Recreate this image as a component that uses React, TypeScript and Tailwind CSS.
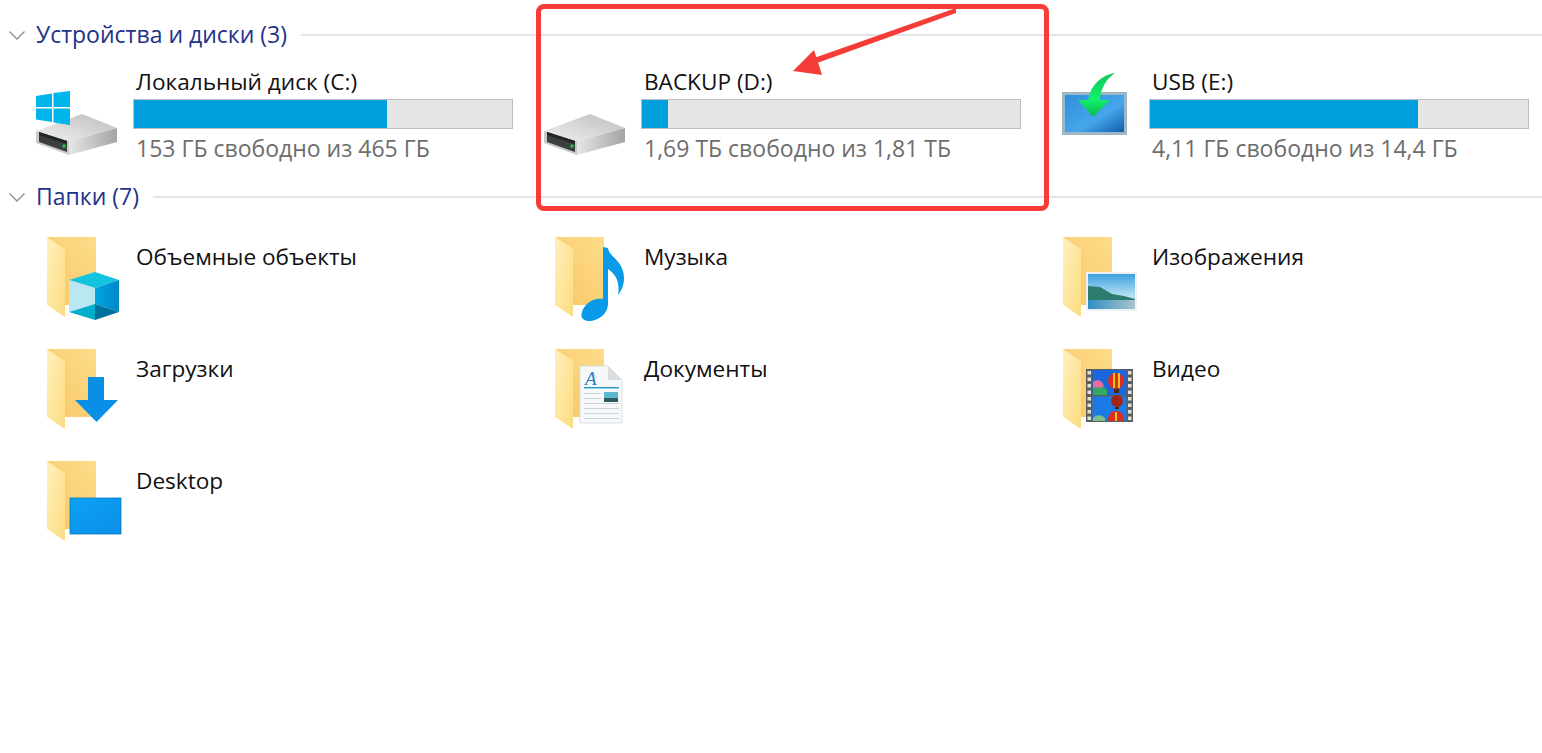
import React from "react";

const drives = [
  { name: "Локальный диск (C:)", free: "153 ГБ свободно из 465 ГБ", used: 253, icon: "system" },
  { name: "BACKUP (D:)", free: "1,69 ТБ свободно из 1,81 ТБ", used: 26, icon: "drive" },
  { name: "USB (E:)", free: "4,11 ГБ свободно из 14,4 ГБ", used: 268, icon: "usb" },
];

const folders = [
  { name: "Объемные объекты", icon: "cube" },
  { name: "Музыка", icon: "music" },
  { name: "Изображения", icon: "image" },
  { name: "Загрузки", icon: "download" },
  { name: "Документы", icon: "doc" },
  { name: "Видео", icon: "video" },
  { name: "Desktop", icon: "desktop" },
];

function SharedDefs() {
  return (
    <svg width="0" height="0" className="absolute">
      <defs>
        <linearGradient id="folderBack" x1="0" y1="1" x2="1" y2="0">
          <stop offset="0" stopColor="#f8c766" />
          <stop offset="1" stopColor="#fddc8a" />
        </linearGradient>
        <linearGradient id="folderFlap" x1="0" y1="0" x2="1" y2="1">
          <stop offset="0" stopColor="#fff0bb" />
          <stop offset="1" stopColor="#fcdc80" />
        </linearGradient>
        <linearGradient id="driveTop" x1="0" y1="1" x2="1" y2="0">
          <stop offset="0" stopColor="#f1f1f1" />
          <stop offset="1" stopColor="#bcbcbc" />
        </linearGradient>
        <linearGradient id="driveRight" x1="0" y1="0" x2="1" y2="0">
          <stop offset="0" stopColor="#e6e6e6" />
          <stop offset="1" stopColor="#a4a4a4" />
        </linearGradient>
        <linearGradient id="usbScreen" x1="0" y1="0" x2="1" y2="1">
          <stop offset="0" stopColor="#2f8fdc" />
          <stop offset="0.6" stopColor="#45a6ea" />
          <stop offset="1" stopColor="#0f5cab" />
        </linearGradient>
        <linearGradient id="usbArrow" x1="0" y1="0" x2="0" y2="1">
          <stop offset="0" stopColor="#0fc95c" />
          <stop offset="0.6" stopColor="#12f06c" />
          <stop offset="1" stopColor="#09b94f" />
        </linearGradient>
        <linearGradient id="desktopFill" x1="0" y1="0" x2="1" y2="1">
          <stop offset="0" stopColor="#0aa2f5" />
          <stop offset="1" stopColor="#0d8ee8" />
        </linearGradient>
        <linearGradient id="cubeRight" x1="0" y1="0" x2="1" y2="0">
          <stop offset="0" stopColor="#00a6dd" />
          <stop offset="1" stopColor="#0085c9" />
        </linearGradient>
        <linearGradient id="photoSky" x1="0" y1="0" x2="0" y2="1">
          <stop offset="0" stopColor="#3f9fe0" />
          <stop offset="1" stopColor="#d3f0f4" />
        </linearGradient>
        <linearGradient id="photoWater" x1="0" y1="0" x2="1" y2="0">
          <stop offset="0" stopColor="#2f8fc2" />
          <stop offset="1" stopColor="#a9c4cc" />
        </linearGradient>
      </defs>
    </svg>
  );
}

function DriveBody() {
  return (
    <>
      <polygon points="2,63 48,46 83,60 35,73" fill="url(#driveTop)" />
      <polygon points="35,73 83,60 83,74 35,87" fill="url(#driveRight)" />
      <polygon points="2,63 35,73 35,87 2,75" fill="#c9c9c9" />
      <polygon points="5,64 33,73 33,84 5,74" fill="#3c3f3f" />
      <polygon points="5,64 33,73 33,76 5,67" fill="#232525" />
      <circle cx="30" cy="78" r="1.8" fill="#22c24a" />
    </>
  );
}

function DriveIcon({ kind }: { kind: string }) {
  return (
    <svg viewBox="0 0 99 92" className="h-[92px] w-[99px] shrink-0">
      {kind === "usb" ? (
        <>
          <rect x="12" y="24" width="65" height="43" fill="#9fb6c4" />
          <rect x="15" y="27" width="59" height="37" fill="url(#usbScreen)" />
          <path
            d="M65 5 C52 7 41 16 38 32 L28 32 L43 49 L60 32 L50 32 C51 20 56 11 65 5Z"
            fill="url(#usbArrow)"
          />
        </>
      ) : (
        <>
          <DriveBody />
          {kind === "system" && (
            <g fill="#00b4ec">
              <polygon points="2,28 18,25.5 18,39 2,39" />
              <polygon points="19.5,25 36,23 36,39 19.5,39" />
              <polygon points="2,40.5 18,40.5 18,54 2,51.5" />
              <polygon points="19.5,40.5 36,40.5 36,57 19.5,54.5" />
            </g>
          )}
        </>
      )}
    </svg>
  );
}

function FolderOverlay({ kind }: { kind: string }) {
  switch (kind) {
    case "cube":
      return (
        <>
          <polygon points="35,52 61,44 85,52 61,60" fill="#12c4de" />
          <polygon points="35,52 61,60 61,76 35,84" fill="#b9e8f2" />
          <polygon points="61,60 85,52 85,84 61,76" fill="url(#cubeRight)" />
          <polygon points="35,84 61,76 61,92" fill="#00aecb" />
          <polygon points="61,76 85,84 61,92" fill="#00709f" />
        </>
      );
    case "music":
      return (
        <path
          d="M61 19 L66 20 C67 29 82 33 82 50 C82 58 79 63 76 67 C78 56 75 47 66 41 L66 76 C66 86 56 93 47 93 C41 93 38 89 40 84 C42 76 52 69 61 71Z"
          fill="#0a9be8"
        />
      );
    case "image":
      return (
        <>
          <rect x="36" y="44" width="51" height="39" fill="#eef2f4" />
          <rect x="38" y="46" width="47" height="27" fill="url(#photoSky)" />
          <path d="M38 58 L50 59 L62 66 L74 68 L85 71 L85 73 L38 73Z" fill="#2c7d6d" />
          <rect x="38" y="72" width="47" height="9" fill="url(#photoWater)" />
        </>
      );
    case "download":
      return <polygon points="54,37 70,37 70,60 84,60 62.5,82 41,60 54,60" fill="#0a8fe6" />;
    case "doc":
      return (
        <>
          <polygon points="38,26 66,26 80,40 80,83 38,83" fill="#f6f8f9" stroke="#d5d9dc" strokeWidth="0.8" />
          <polygon points="66,26 66,40 80,40" fill="#d9dde0" />
          <text x="43" y="45" fontSize="19" fontStyle="italic" fill="#1f7fc4" fontFamily="'Liberation Serif', serif">
            A
          </text>
          <rect x="42" y="47" width="35" height="1.4" fill="#1b9ac9" />
          <rect x="62" y="52" width="14" height="10" fill="#5fb7cf" />
          <rect x="62" y="58" width="14" height="4" fill="#2d5a60" />
          <g fill="#c5d3dc">
            <rect x="42" y="53" width="17" height="1" />
            <rect x="42" y="58" width="17" height="1" />
            <rect x="42" y="63" width="35" height="1" />
            <rect x="42" y="68" width="35" height="1" />
            <rect x="42" y="73" width="35" height="1" />
            <rect x="42" y="78" width="35" height="1" />
          </g>
        </>
      );
    case "video":
      return (
        <>
          <rect x="36" y="29" width="47" height="53" fill="#5c5f60" />
          <g fill="#e4e0d2">
            {[31, 37.5, 44, 50.5, 57, 63.5, 70, 76.5].map((y) => (
              <React.Fragment key={y}>
                <rect x="37.5" y={y} width="3.5" height="3.5" />
                <rect x="78" y={y} width="3.5" height="3.5" />
              </React.Fragment>
            ))}
          </g>
          <rect x="42.5" y="30" width="34" height="25" fill="#1a66dc" />
          <rect x="42.5" y="56.5" width="34" height="24.5" fill="#1a7ae8" />
          <path d="M43 47 C48 42 54 46 57 50 L57 55 L43 55Z" fill="#35a862" />
          <path d="M43 42 C47 38 52 40 54 46 L50 48 L43 47Z" fill="#e66fa0" />
          <circle cx="66" cy="41" r="8" fill="#d92f1c" />
          <rect x="63" y="33" width="2" height="15" fill="#f2c21c" />
          <rect x="68" y="33" width="2" height="15" fill="#f2c21c" />
          <rect x="64" y="49" width="5" height="4" fill="#4a2a12" />
          <circle cx="67" cy="61" r="6" fill="#a32414" />
          <rect x="65" y="67" width="4" height="2" fill="#4a2a12" />
          <path d="M58 81 C58 73 62 71 66 71 C70 71 74 73 74 81Z" fill="#d92f1c" />
          <rect x="65" y="72" width="2" height="9" fill="#f2c21c" />
          <path d="M43 78 C47 74 52 75 55 78 L55 81 L43 81Z" fill="#7dc08d" />
        </>
      );
    case "desktop":
      return <rect x="36" y="46" width="51" height="36" fill="url(#desktopFill)" stroke="#0b7cc4" strokeWidth="0.8" />;
    default:
      return null;
  }
}

function FolderIcon({ kind }: { kind: string }) {
  return (
    <svg viewBox="0 0 99 96" className="h-[96px] w-[99px] shrink-0">
      <polygon points="13,9 62,9 62,77 31,77" fill="url(#folderBack)" />
      <polygon points="13,9 31,21 31,89 13,77" fill="url(#folderFlap)" />
      <FolderOverlay kind={kind} />
    </svg>
  );
}

function SectionHeader({ title }: { title: string }) {
  return (
    <div className="flex h-[34px] items-center">
      <svg viewBox="0 0 16 9" className="ml-[9px] h-[9px] w-[16px] shrink-0" fill="none" stroke="#8a8f96" strokeWidth="1.3">
        <path d="M0.5 0.5 L8 8 L15.5 0.5" />
      </svg>
      <span className="ml-[11px] pb-[2px] text-[23px] text-[#1e3389]">{title}</span>
      <div className="ml-[14px] h-[2px] flex-1 bg-[#e4e4e4]" />
    </div>
  );
}

export default function App() {
  return (
    <div
      className="relative h-[753px] w-full overflow-hidden bg-white pt-[18px] text-[#111]"
      style={{ fontFamily: "'Open Sans', 'Noto Sans', sans-serif" }}
    >
      <SharedDefs />
      <SectionHeader title="Устройства и диски (3)" />
      <div className="mt-[16px] grid h-[112px] grid-cols-[508px_508px_508px] pl-[34px]">
        {drives.map((d) => (
          <div key={d.name} className="flex items-start">
            <DriveIcon kind={d.icon} />
            <div className="w-[380px]">
              <div className="h-[30px] pb-[2px] pl-[3px] text-[22.6px] leading-[28px]">{d.name}</div>
              <div className="mt-[1px] h-[30px] border border-[#bcbcbc] bg-[#e6e6e6]">
                <div className="h-full bg-[#00a0dc]" style={{ width: d.used }} />
              </div>
              <div className="mt-[4px] pl-[3px] text-[23px] leading-[30px] text-[#6d6d6d]">{d.free}</div>
            </div>
          </div>
        ))}
      </div>
      <SectionHeader title="Папки (7)" />
      <div className="mt-[14px] grid auto-rows-[112px] grid-cols-[508px_508px_508px] pl-[34px]">
        {folders.map((f) => (
          <div key={f.name} className="flex items-start">
            <FolderIcon kind={f.icon} />
            <div className="mt-[14px] pl-[3px] text-[22.6px] leading-[30px]">{f.name}</div>
          </div>
        ))}
      </div>

      {/* red annotation over the D: drive */}
      <div className="absolute left-[536px] top-[4px] h-[207px] w-[513px] rounded-[8px] border-[5px] border-[#f63c37]" />
      <svg viewBox="0 0 190 90" className="absolute left-[780px] top-0 h-[90px] w-[190px]">
        <polygon points="176,8 176,13 37,63 34,58" fill="#f63c37" />
        <polygon points="13,71 34,50 42,75" fill="#f63c37" />
      </svg>
    </div>
  );
}
